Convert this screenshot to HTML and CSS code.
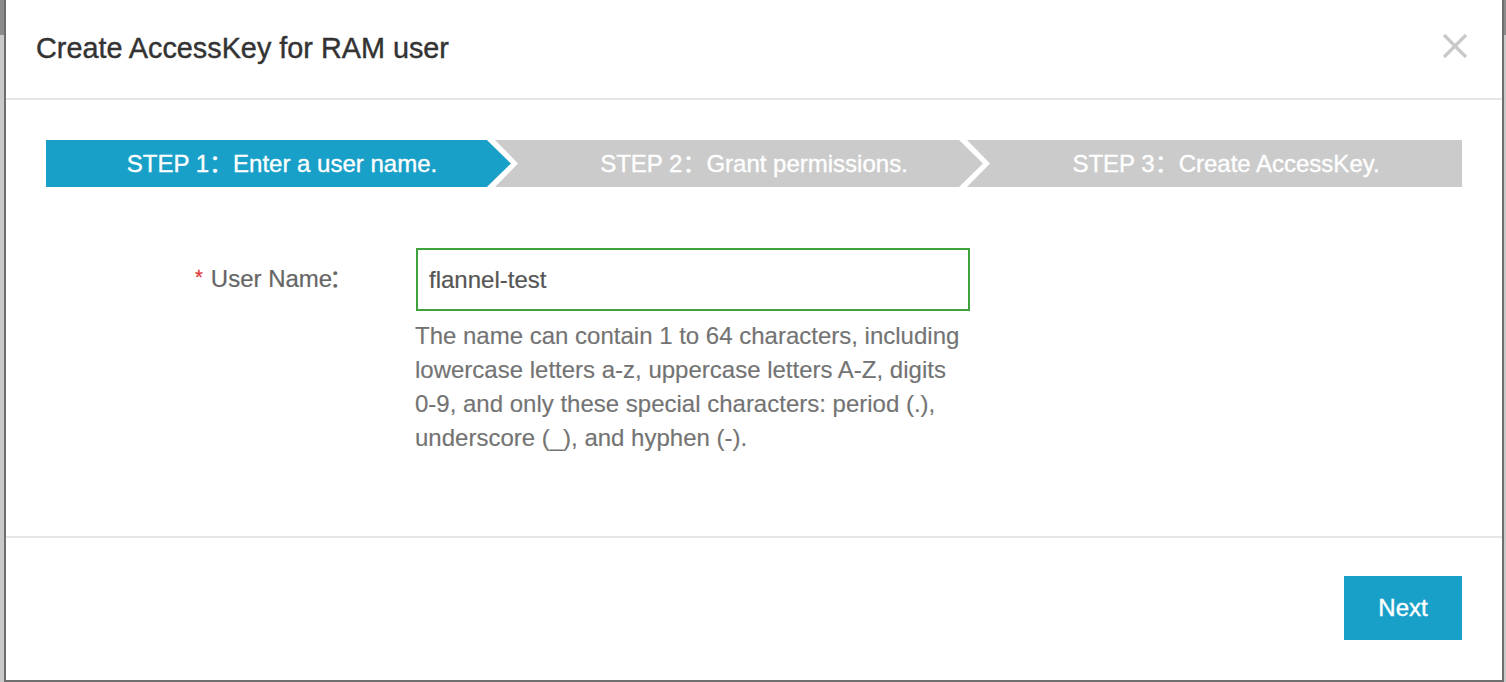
FILE: index.html
```html
<!DOCTYPE html>
<html lang="en">
<head>
<meta charset="utf-8">
<title>Create AccessKey for RAM user</title>
<link rel="stylesheet" href="styles.css">
</head>
<body>
<div class="modal">
  <div class="modal-header">
    <h1 class="modal-title">Create AccessKey for RAM user</h1>
    <button class="close" aria-label="Close">
      <svg width="26" height="26" viewBox="0 0 26 26"><path d="M2 2 L24 24 M24 2 L2 24" stroke="#c9c9c9" stroke-width="3.2" fill="none"/></svg>
    </button>
  </div>
  <div class="modal-body">
    <ol class="steps">
      <li class="step active"><span class="step-text">STEP 1：Enter a user name.</span></li>
      <li class="step"><span class="step-text">STEP 2：Grant permissions.</span></li>
      <li class="step"><span class="step-text">STEP 3：Create AccessKey.</span></li>
    </ol>
    <div class="form">
      <label class="label" for="username"><span class="req">*</span>User Name<span class="colon">：</span></label>
      <input class="input" id="username" type="text" value="flannel-test">
      <p class="help">The name can contain 1 to 64 characters, including lowercase letters a-z, uppercase letters A-Z, digits 0-9, and only these special characters: period (.), underscore (_), and hyphen (-).</p>
    </div>
  </div>
  <div class="modal-footer">
    <button class="btn-primary">Next</button>
  </div>
</div>
</body>
</html>
```
FILE: styles.css
```css
html, body {
  margin: 0;
  padding: 0;
}
body {
  width: 1506px;
  height: 682px;
  overflow: hidden;
  box-sizing: border-box;
  padding: 0 2px 0 4px;
  display: flex;
  background: linear-gradient(#8b8b8b 0, #8b8b8b 35px, #c9c9c9 35px);
  font-family: "Liberation Sans", "Noto Sans CJK SC", Arial, sans-serif;
}
.modal {
  flex: 1;
  height: 682px;
  box-sizing: border-box;
  background: #fff;
  border: 2px solid #6e6e6e;
  border-top: 0;
  display: flex;
  flex-direction: column;
}
.modal-header {
  height: 100px;
  box-sizing: border-box;
  border-bottom: 2px solid #e6e6e6;
  display: flex;
  align-items: center;
  justify-content: space-between;
  padding: 0 34px 0 30px;
}
.modal-title {
  margin: 0;
  font-size: 28.8px;
  font-weight: normal;
  color: #333;
  padding-bottom: 2px;
  -webkit-text-stroke: 0.4px #333;
}
.close {
  border: 0;
  background: none;
  padding: 0;
  width: 26px;
  height: 26px;
  margin-bottom: 6px;
  cursor: pointer;
}
.close svg {
  display: block;
}
.modal-body {
  height: 436px;
  box-sizing: border-box;
  padding: 40px 40px 0;
}
.steps {
  list-style: none;
  margin: 0;
  padding: 0;
  display: flex;
  height: 47px;
  background: #cbcbcb;
}
.step {
  flex: 1;
  position: relative;
  text-align: center;
  color: #fff;
  font-size: 24px;
  line-height: 47px;
}
.step.active::before {
  content: "";
  position: absolute;
  top: 0;
  left: 0;
  right: 0;
  bottom: 0;
  background: #19a0c8;
  clip-path: polygon(0 0, calc(100% - 31px) 0, calc(100% - 7px) 50%, calc(100% - 31px) 100%, 0 100%);
}
.step:not(:last-child)::after {
  content: "";
  position: absolute;
  top: 0;
  right: 0;
  width: 31px;
  height: 100%;
  background: #fff;
  clip-path: polygon(0 0, 8px 0, 31px 50%, 8px 100%, 0 100%, 24px 50%);
}
.step-text {
  position: relative;
  -webkit-text-stroke: 0.35px #fff;
}
.form {
  display: grid;
  grid-template-columns: 221px 554px;
  margin-top: 61px;
  padding-left: 149px;
}
.label {
  font-size: 24px;
  line-height: 59px;
  color: #666;
  -webkit-text-stroke: 0.2px #666;
}
.colon {
  margin-left: -3px;
}
.req {
  color: #e4393c;
  -webkit-text-stroke: 0.3px #e4393c;
  font-size: 20px;
  vertical-align: 3px;
  margin-right: 8px;
}
.input {
  width: 554px;
  height: 63px;
  box-sizing: border-box;
  border: 2px solid #3da33a;
  padding: 0 11px;
  margin: 0;
  font-family: "Liberation Sans", Arial, sans-serif;
  font-size: 24px;
  color: #555;
  outline: none;
  background: #fff;
  -webkit-text-stroke: 0.2px #555;
}
.help {
  grid-column: 2;
  margin: 8px 0 0 -1px;
  font-size: 24px;
  line-height: 34px;
  color: #737373;
  -webkit-text-stroke: 0.15px #737373;
}
.modal-footer {
  flex: 1;
  border-top: 2px solid #e6e6e6;
  display: flex;
  justify-content: flex-end;
  align-items: flex-start;
  padding: 38px 40px 0;
}
.btn-primary {
  width: 118px;
  height: 64px;
  border: 0;
  background: #19a0c8;
  color: #fff;
  font-family: "Liberation Sans", Arial, sans-serif;
  font-size: 24px;
  padding: 0;
  cursor: pointer;
  -webkit-text-stroke: 0.4px #fff;
}
```
